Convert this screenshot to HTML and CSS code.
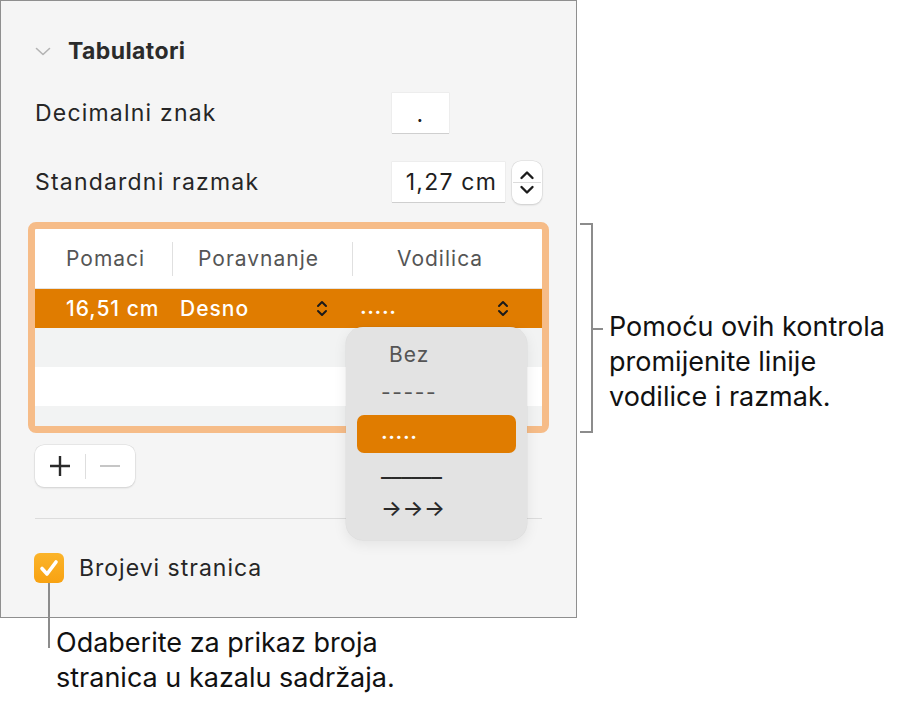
FILE: index.html
```html
<!DOCTYPE html>
<html lang="hr">
<head>
    <meta charset="UTF-8">
    <meta name="viewport" content="width=device-width, initial-scale=1.0">
    <title>Tabulatori</title>
    <link rel="stylesheet" href="styles.css">
</head>
<body>
    <div class="figure">
        <div class="top">
            <div class="panel">
                <div class="section-head">
                    <svg class="disclosure" width="16" height="9" viewBox="0 0 16 9"><path d="M1.5 1.5 L8 7.5 L14.5 1.5" fill="none" stroke="#b3b3b3" stroke-width="1.6" stroke-linecap="round" stroke-linejoin="round"/></svg>
                    <span>Tabulatori</span>
                </div>

                <div class="field-row first">
                    <span class="label">Decimalni znak</span>
                    <div class="input small">.</div>
                </div>

                <div class="field-row">
                    <span class="label">Standardni razmak</span>
                    <div class="input wide">1,27 cm</div>
                    <div class="stepper">
                        <svg width="30" height="43" viewBox="0 0 30 43">
                            <path d="M9.5 17 L15 11.5 L20.5 17" fill="none" stroke="#1c1c1c" stroke-width="2.4" stroke-linecap="round" stroke-linejoin="round"/>
                            <line x1="1" y1="21.5" x2="29" y2="21.5" stroke="#dcdcdc" stroke-width="1"/>
                            <path d="M9.5 26 L15 31.5 L20.5 26" fill="none" stroke="#1c1c1c" stroke-width="2.4" stroke-linecap="round" stroke-linejoin="round"/>
                        </svg>
                    </div>
                </div>

                <!-- tab stop list -->
                <div class="tab-table">
                    <div class="t-head">
                        <div class="cell c1">Pomaci</div>
                        <div class="cell c2">Poravnanje</div>
                        <div class="cell c3">Vodilica</div>
                    </div>
                    <div class="t-row selected">
                        <div class="cell c1">16,51 cm</div>
                        <div class="cell c2">
                            <span>Desno</span>
                            <svg class="updown" width="12" height="17" viewBox="0 0 12 17"><path d="M2 6 L6 2 L10 6 M2 11 L6 15 L10 11" fill="none" stroke="#1a1a1a" stroke-width="2" stroke-linecap="round" stroke-linejoin="round"/></svg>
                        </div>
                        <div class="cell c3">
                            <span class="dots">.....</span>
                            <svg class="updown" width="12" height="17" viewBox="0 0 12 17"><path d="M2 6 L6 2 L10 6 M2 11 L6 15 L10 11" fill="none" stroke="#1a1a1a" stroke-width="2" stroke-linecap="round" stroke-linejoin="round"/></svg>
                        </div>
                    </div>
                    <div class="t-row alt"></div>
                    <div class="t-row"></div>
                    <div class="t-row alt"></div>
                </div>

                <div class="add-remove">
                    <span class="seg">
                        <svg width="22" height="22" viewBox="0 0 22 22"><path d="M11 1 V21 M1 11 H21" stroke="#2a2a2a" stroke-width="2.4"/></svg>
                    </span>
                    <span class="seg-sep"></span>
                    <span class="seg">
                        <svg width="22" height="22" viewBox="0 0 22 22"><path d="M1 11 H21" stroke="#c6c6c6" stroke-width="2"/></svg>
                    </span>
                </div>

                <div class="divider"></div>

                <div class="check-row">
                    <span class="checkbox">
                        <svg width="30" height="30" viewBox="0 0 30 30"><path d="M8 15.5 L13 21 L22 9" fill="none" stroke="#fff" stroke-width="3.6" stroke-linecap="round" stroke-linejoin="round"/></svg>
                    </span>
                    <span>Brojevi stranica</span>
                </div>

                <!-- open leader menu -->
                <div class="popup">
                    <div class="menu-item none">Bez</div>
                    <div class="menu-item dashes">-----</div>
                    <div class="menu-item active">.....</div>
                    <div class="menu-item line">______</div>
                    <div class="menu-item arrows">→→→</div>
                </div>
            </div>

            <div class="note note-right">
                <div class="bracket"></div>
                <p>Pomoću ovih kontrola<br>promijenite linije<br>vodilice i razmak.</p>
            </div>
        </div>

        <div class="note note-bottom">
            <p>Odaberite za prikaz broja<br>stranica u kazalu sadržaja.</p>
        </div>
    </div>
</body>
</html>
```

FILE: styles.css
```css
body {
    margin: 0;
    background-color: #ffffff;
    font-family: 'Inter', 'Liberation Sans', sans-serif;
    color: #222;
}
.figure {
    width: 902px;
    height: 708px;
}
.top {
    display: flex;
    align-items: flex-start;
}

.panel {
    position: relative;
    box-sizing: border-box;
    width: 577px;
    height: 618px;
    padding: 0 34px;
    border: 1px solid #8f8f8f;
    background-color: #f5f5f5;
}
.section-head {
    display: flex;
    align-items: center;
    height: 40px;
    margin-top: 30px;
    font-size: 23px;
    font-weight: 700;
    letter-spacing: 0.4px;
    color: #2b2b2b;
}
.disclosure {
    margin-right: 17px;
}

.field-row {
    display: flex;
    align-items: center;
    height: 40px;
    margin-top: 29px;
}
.field-row.first {
    margin-top: 22px;
}
.label {
    flex: 0 0 357px;
    font-size: 23px;
    letter-spacing: 1.2px;
    color: #262626;
}
.input {
    box-sizing: border-box;
    height: 40px;
    background-color: #fff;
    box-shadow: 0 1px 0 #cfcfcf, 0 0 0 0.5px #e6e6e6;
    font-size: 23px;
    letter-spacing: 1.2px;
    color: #1e1e1e;
    display: flex;
    align-items: center;
}
.input.small {
    width: 57px;
    justify-content: center;
    padding-top: 2px;
}
.input.wide {
    width: 114px;
    justify-content: flex-end;
    padding-right: 8px;
}
.stepper {
    width: 30px;
    height: 43px;
    margin-left: 7px;
    border-radius: 9px;
    background-color: #fff;
    box-shadow: 0 0 0 0.5px #d8d8d8, 0 1px 2px rgba(0, 0, 0, 0.18);
}
.stepper svg {
    display: block;
}

.tab-table {
    box-sizing: border-box;
    height: 211px;
    margin: 20px -7px 0;
    border: 7px solid #f6bc88;
    border-radius: 8px;
    background-color: #fff;
    overflow: hidden;
}
.t-head,
.t-row {
    display: grid;
    grid-template-columns: 137px 180px 1fr;
}
.t-head {
    height: 59px;
    align-items: center;
    border-bottom: 1px solid #e3e3e3;
    font-size: 21px;
    letter-spacing: 1px;
    color: #555;
}
.t-head .cell {
    height: 34px;
    display: flex;
    align-items: center;
}
.t-head .c1 {
    padding-left: 31px;
}
.t-head .c2 {
    border-left: 1px solid #e0e0e0;
    padding-left: 25px;
}
.t-head .c3 {
    border-left: 1px solid #e0e0e0;
    padding-left: 44px;
}
.t-row {
    height: 39px;
}
.t-row.alt {
    background-color: #f2f3f3;
}
.t-row.selected {
    background-color: #e07c00;
    color: #fff;
    font-size: 21px;
    font-weight: 500;
    letter-spacing: 1px;
    align-items: center;
}
.t-row.selected .cell {
    display: flex;
    align-items: center;
    justify-content: space-between;
}
.t-row.selected .c1 {
    padding-left: 31px;
}
.t-row.selected .c2 {
    padding: 0 24px 0 8px;
}
.t-row.selected .c3 {
    padding: 0 33px 0 8px;
}
.dots {
    font-weight: 600;
    letter-spacing: 0.6px;
    margin-top: -4px;
}

.add-remove {
    display: flex;
    align-items: center;
    width: 100px;
    height: 42px;
    margin-top: 12px;
    border-radius: 9px;
    background-color: #fff;
    box-shadow: 0 0 0 0.5px #dadada, 0 1px 2px rgba(0, 0, 0, 0.16);
}
.seg {
    flex: 1;
    display: flex;
    justify-content: center;
}
.seg svg {
    display: block;
}
.seg-sep {
    width: 1px;
    height: 25px;
    background-color: #dedede;
}

.divider {
    margin-top: 31px;
    border-top: 1px solid #dcdcdc;
}

.check-row {
    display: flex;
    align-items: center;
    height: 30px;
    margin-top: 34px;
    font-size: 23px;
    letter-spacing: 1px;
    color: #262626;
}
.checkbox {
    position: relative;
    width: 30px;
    height: 30px;
    margin-left: -1px;
    margin-right: 15px;
    border-radius: 6px;
    background: linear-gradient(#fbb42a, #f8a212);
}
.checkbox svg {
    display: block;
}
/* leader line for the bottom caption */
.checkbox::after {
    content: "";
    position: absolute;
    left: 14px;
    top: 30px;
    width: 2px;
    height: 65px;
    background-color: #8c8c8c;
}

.popup {
    position: absolute;
    left: 345px;
    top: 326px;
    box-sizing: border-box;
    width: 181px;
    height: 213px;
    padding: 9px 11px 0;
    border-radius: 17px;
    background-color: #e3e3e3;
    box-shadow: 0 0 0 0.5px rgba(0, 0, 0, 0.06), 0 4px 14px rgba(0, 0, 0, 0.08);
    font-size: 21px;
    color: #333;
}
.menu-item {
    height: 38px;
    line-height: 38px;
    padding-left: 24px;
}
.menu-item.none {
    padding-left: 32px;
    letter-spacing: 1px;
    color: #555;
}
.menu-item.dashes {
    color: #555;
    letter-spacing: 1.6px;
}
.menu-item.active {
    margin-top: 3px;
    border-radius: 7px;
    background-color: #e07c00;
    color: #fff;
    font-weight: 600;
    letter-spacing: 0.6px;
    line-height: 34px;
}
.menu-item.line {
    height: 36px;
    line-height: 32px;
    color: #2a2a2a;
    letter-spacing: -0.4px;
    font-size: 23px;
}
.menu-item.arrows {
    color: #2a2a2a;
    font-size: 22px;
    font-weight: 500;
    letter-spacing: 0.5px;
}

.note p {
    margin: 0;
    font-size: 27px;
    line-height: 35px;
    color: #111;
}
.note-right {
    display: flex;
    align-items: flex-start;
    margin-top: 223px;
    margin-left: 3px;
}
.bracket {
    position: relative;
    box-sizing: border-box;
    width: 13px;
    height: 210px;
    border: 2px solid #8c8c8c;
    border-left: none;
}
.bracket::after {
    content: "";
    position: absolute;
    right: -12px;
    top: 103px;
    width: 10px;
    height: 2px;
    background-color: #8c8c8c;
}
.note-right p {
    margin-top: 86px;
    margin-left: 16px;
}
.note-bottom p {
    padding: 7px 0 0 56px;
}
```
